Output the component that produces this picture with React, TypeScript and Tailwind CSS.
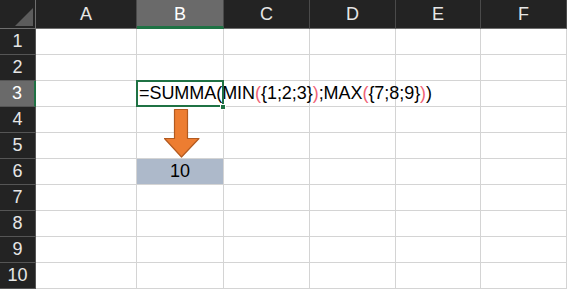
const COLS = ["A", "B", "C", "D", "E", "F"];
const COL_W = [101, 87, 86, 86, 85, 86];
const ROWS = [1, 2, 3, 4, 5, 6, 7, 8, 9, 10];

const font = { fontFamily: '"Liberation Sans", Arial, sans-serif' };

function Formula() {
  const pink = "text-[#f06477]";
  return (
    <span className="whitespace-nowrap text-[18px] tracking-[-0.05px] text-black">
      =SUMMA(MIN<span className={pink}>(</span>
      {"{1;2;3}"}
      <span className={pink}>)</span>;MAX<span className={pink}>(</span>
      {"{7;8;9}"}
      <span className={pink}>)</span>)
    </span>
  );
}

function Arrow() {
  return (
    <svg width="38" height="52" viewBox="0 0 38 52" className="absolute left-[27px] top-[1px] z-10">
      <path
        d="M10.5 1.5 H23.5 V30.5 H35 L17.5 49 L0.5 30.5 H10.5 Z"
        fill="#ed7d31"
        stroke="#b35a1f"
        strokeWidth="1.2"
        strokeLinejoin="round"
      />
    </svg>
  );
}

export default function App() {
  return (
    <div className="w-[567px] h-[289px] overflow-hidden bg-white select-none" style={font}>
      <div
        className="grid"
        style={{ gridTemplateColumns: `36px ${COL_W.map((w) => w + "px").join(" ")}`, gridTemplateRows: "29px repeat(10, 26px)" }}
      >
        {/* corner */}
        <div className="relative bg-[#232323] border-r border-b border-[#6e6e6e]">
          <div
            className="absolute left-[15px] top-[8px] w-[18px] h-[18px] bg-[#5c5c5c]"
            style={{ clipPath: "polygon(100% 0, 100% 100%, 0 100%)" }}
          />
        </div>
        {COLS.map((c) => (
          <div
            key={c}
            className={
              c === "B"
                ? "flex items-center justify-center bg-[#6a6a6a] border-r border-[#4a4a4a] border-b-[3px] border-b-[#1f7244] text-[18px] text-white pt-[2px]"
                : "flex items-center justify-center bg-[#232323] border-r border-[#4a4a4a] border-b border-b-[#6e6e6e] text-[18px] text-[#e6e6e6]"
            }
          >
            {c}
          </div>
        ))}

        {ROWS.map((r) => (
          <Row key={r} r={r} />
        ))}
      </div>
    </div>
  );
}

function Row({ r }: { r: number }) {
  const sel = r === 3;
  return (
    <>
      <div
        className={
          sel
            ? "flex items-center justify-center bg-[#6a6a6a] border-b border-[#555] border-r-[2px] border-r-[#1f7244] text-[18px] text-white"
            : "flex items-center justify-center bg-[#232323] border-b border-[#555] border-r border-r-[#555] text-[18px] text-[#e6e6e6]"
        }
      >
        {r}
      </div>
      {COLS.map((c) => {
        const isB = c === "B";
        let cls = "relative border-r border-b border-[#d4d4d4]";
        if (isB && r === 6) cls += " bg-[#adb9ca]";
        return (
          <div key={c} className={cls}>
            {isB && r === 3 && (
              <>
                <div className="absolute left-[-1px] top-[-1px] w-[88px] h-[27px] border-2 border-[#1f7244] z-20" />
                <div className="absolute left-[83px] top-[23px] w-[6px] h-[6px] bg-[#1f7244] border border-white z-30" />
                <div className="absolute left-[2px] top-0 h-full flex items-center z-10">
                  <Formula />
                </div>
              </>
            )}
            {isB && r === 4 && <Arrow />}
            {isB && r === 6 && (
              <div className="h-full flex items-center justify-center text-[18px] text-black">10</div>
            )}
          </div>
        );
      })}
    </>
  );
}
